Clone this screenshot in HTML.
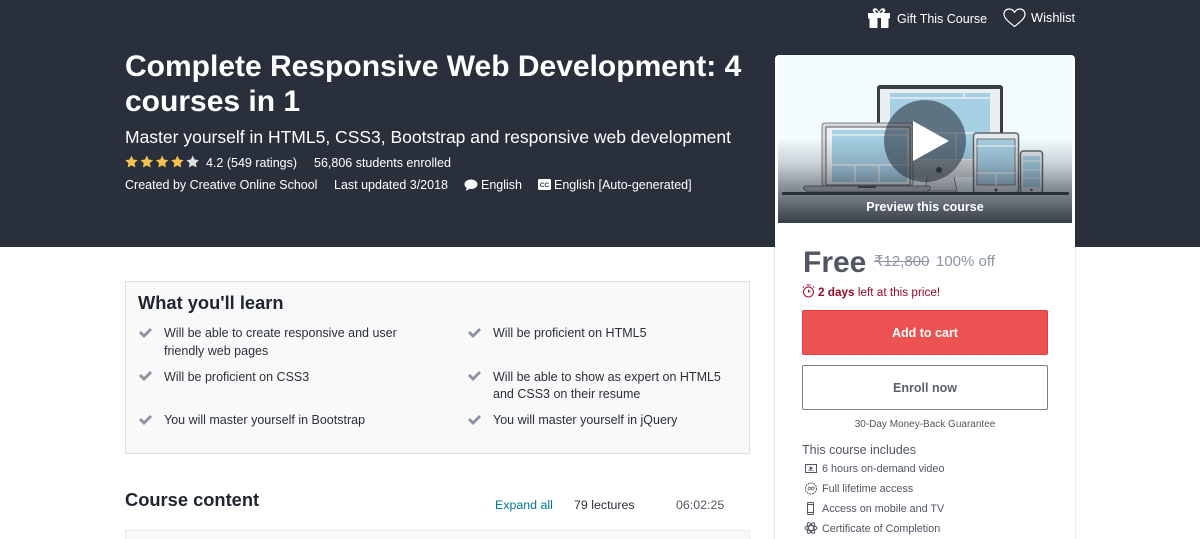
<!DOCTYPE html>
<html style="overflow:hidden;height:539px"><head><meta charset="utf-8"><style>
html,body{margin:0;padding:0;background:#fff}
body{position:relative;width:1200px;height:539px;overflow:hidden;font-family:"Liberation Sans",sans-serif;color:#29303b}
#p{position:absolute;left:0;top:0;width:1200px;height:539px;overflow:hidden}
.t{position:absolute;white-space:nowrap;line-height:1}
.a{position:absolute}
.w{color:#fff}
</style></head><body><div id="p">
<div class="a" style="left:0;top:0;width:1200px;height:247px;background:#29303b"></div>

<svg class="a" style="left:867px;top:8px" width="24" height="20" viewBox="0 0 24 20"><path d="M7 .5c2.200-1 4 1 5 3.500 1-2.500 2.800-4.500 5-3.500 2 1 1.700 3.300-.5 4.500H23v5.500H1V5h6.500C5.300 3.800 5 1.500 7 .5z" fill="#fff"/><path d="M9.500 2.300c1 .4 1.500 1.400 1.800 2.500-1.300 0-2.600-.3-3-1.200-.4-.9.400-1.600 1.200-1.300zM14.500 2.300c-1 .4-1.500 1.400-1.800 2.500 1.300 0 2.600-.3 3-1.200.4-.9-.4-1.600-1.200-1.300z" fill="#29303b"/><path d="M2.500 10h19v9a1 1 0 0 1-1 1h-17a1 1 0 0 1-1-1z" fill="#fff"/><path d="M10.500 10h3.500v10h-3.500z" fill="#29303b"/></svg>
<div class="t w" style="left:897px;top:13px;font-size:12.500px">Gift This Course</div>
<svg class="a" style="left:1003px;top:8px" width="23" height="20" viewBox="0 0 23 20"><path d="M11.500 18.500C6 14 1 10.500 1 6.200 1 3.200 3.300 1 6 1c2.300 0 4.300 1.200 5.500 3.300C12.700 2.200 14.700 1 17 1c2.700 0 5 2.200 5 5.200 0 4.300-5 7.800-10.500 12.300z" fill="none" stroke="#fff" stroke-width="1.200"/></svg>
<div class="t w" style="left:1031px;top:12px;font-size:12.800px">Wishlist</div>

<div class="t w" style="left:125px;top:52px;font-size:30px;font-weight:bold">Complete Responsive Web Development: 4</div>
<div class="t w" style="left:125px;top:87px;font-size:30px;font-weight:bold">courses in 1</div>
<div class="t w" style="left:125px;top:129px;font-size:17.500px">Master yourself in HTML5, CSS3, Bootstrap and responsive web development</div>

<svg class="a" style="left:125px;top:155px" width="74" height="14" viewBox="0 0 74 14">
<g fill="#f4c150"><path d="M6.500.5l1.900 4 4.300.6-3.100 3 .7 4.400-3.800-2.100-3.800 2.100.7-4.400-3.100-3 4.300-.6z"/><path transform="translate(15.300)" d="M6.500.5l1.900 4 4.300.6-3.100 3 .7 4.400-3.800-2.100-3.800 2.100.7-4.400-3.100-3 4.300-.6z"/><path transform="translate(30.600)" d="M6.500.5l1.900 4 4.300.6-3.100 3 .7 4.400-3.800-2.100-3.800 2.100.7-4.400-3.100-3 4.300-.6z"/><path transform="translate(45.900)" d="M6.500.5l1.900 4 4.300.6-3.100 3 .7 4.400-3.800-2.100-3.800 2.100.7-4.400-3.100-3 4.300-.6z"/></g>
<path transform="translate(61.200)" d="M6.500.5l1.900 4 4.300.6-3.100 3 .7 4.400-3.800-2.100-3.800 2.100.7-4.400-3.100-3 4.300-.6z" fill="#dedfe0"/>
</svg>
<div class="t w" style="left:206px;top:157px;font-size:12.500px">4.2 (549 ratings)</div>
<div class="t w" style="left:314px;top:157px;font-size:12.500px">56,806 students enrolled</div>
<div class="t w" style="left:125px;top:179px;font-size:12.500px">Created by Creative Online School</div>
<div class="t w" style="left:334px;top:179px;font-size:12.500px">Last updated 3/2018</div>
<svg class="a" style="left:464px;top:179px" width="14" height="12" viewBox="0 0 14 12"><path d="M7 .5c3.500 0 6.500 2 6.500 4.700S10.500 10 7 10c-.6 0-1.100 0-1.600-.2C4.200 11 2.600 11.500 1.500 11.500c.8-.8 1.200-1.700 1.200-2.700C1.200 7.900.5 6.600.5 5.200.5 2.500 3.500.5 7 .5z" fill="#fff"/></svg>
<div class="t w" style="left:481px;top:179px;font-size:12.500px">English</div>
<svg class="a" style="left:538px;top:179px" width="13" height="11" viewBox="0 0 13 11"><rect width="13" height="11" rx="1.500" fill="#fff"/><text x="6.500" y="8" font-size="6.500" font-weight="bold" text-anchor="middle" fill="#29303b" font-family="Liberation Sans">CC</text></svg>
<div class="t w" style="left:554px;top:179px;font-size:12.500px">English [Auto-generated]</div>

<!-- card -->
<div class="a" style="left:775px;top:55px;width:300px;height:500px;background:#fff;border-radius:4px;box-shadow:0 0 1px 1px rgba(29,30,31,.1)"></div>
<svg class="a" style="left:778px;top:55px" width="294" height="168" viewBox="778 55 294 168">
<defs><linearGradient id="g" x1="0" y1="0" x2="0" y2="1"><stop offset="0" stop-color="#29303b" stop-opacity=".02"/><stop offset=".28" stop-color="#29303b" stop-opacity=".2"/><stop offset=".57" stop-color="#29303b" stop-opacity=".53"/><stop offset=".76" stop-color="#29303b" stop-opacity=".7"/><stop offset="1" stop-color="#29303b" stop-opacity=".94"/></linearGradient></defs>
<rect x="778" y="55" width="294" height="168" fill="#f2fcff"/>
<!-- monitor -->
<path d="M880 85h120a3 3 0 0 1 3 3v72h-126v-72a3 3 0 0 1 3-3z" fill="#3a3d43"/>
<rect x="880" y="89" width="120" height="71" fill="#e9eef0"/>
<rect x="890" y="93" width="100" height="66" fill="#a5cfe3"/>
<path d="M890 98h100M964 93v5M890 133h100M956 133v26" stroke="#e9eef0" stroke-width="1.500"/>
<rect x="877" y="160" width="126" height="17" fill="#d6dadc"/>
<circle cx="939" cy="170" r="3" fill="#2f3238"/>
<path d="M927 177l-2 14h32l-3-14" fill="#e4e8ea" stroke="#777" />
<!-- laptop -->
<rect x="822" y="123" width="91" height="63" rx="3" fill="#d7dadc" stroke="#7c8085" stroke-width="1"/>
<rect x="826" y="127" width="84" height="58" fill="#eef1f2" stroke="#55585d" stroke-width="1"/>
<rect x="832" y="130" width="75" height="52" fill="#a5cfe3"/>
<path d="M832 135h75M832 165h75M855 165v17M879 165v17" stroke="#e9eef0" stroke-width="1.500"/>
<path d="M805 186h123a2 2 0 0 1 2 3l-3 3H808l-4-3a2 2 0 0 1 1-3z" fill="#c2c6c9" stroke="#6b6f74"/>
<rect x="858" y="186" width="18" height="2" fill="#444"/>
<!-- tablet -->
<rect x="973.500" y="133" width="45" height="60" rx="3" fill="#e6e9ea" stroke="#5d6167" stroke-width="1.500"/>
<rect x="977" y="139" width="38" height="46" fill="#a5cfe3" stroke="#6b6f74"/>
<path d="M977 146h38M977 173h38M996 173v12" stroke="#e9eef0" stroke-width="1.500"/>
<circle cx="996" cy="190" r="1.500" fill="#333"/>
<!-- phone -->
<rect x="1020.500" y="151" width="22" height="42" rx="3" fill="#e6e9ea" stroke="#5d6167" stroke-width="1.500"/>
<rect x="1023" y="156" width="17" height="31" fill="#a5cfe3"/>
<path d="M1023 161h17M1023 170h17M1023 178h17" stroke="#e9eef0" stroke-width="1"/>
<circle cx="1031.500" cy="190" r="1.200" fill="#333"/>
<rect x="778" y="140" width="294" height="83" fill="url(#g)"/>
<rect x="782" y="192" width="287" height="3" rx="1" fill="#2a2e35"/>
<circle cx="925" cy="141" r="41" fill="#29303b" opacity=".58"/>
<path d="M913 121l36 20-36 20z" fill="#fff"/>
</svg>
<div class="t w" style="left:778px;top:201px;width:294px;text-align:center;font-size:12.500px;font-weight:bold">Preview this course</div>

<div class="t" style="left:803px;top:248px;font-size:30px;font-weight:bold;color:#505763">Free</div>
<div class="t" style="left:874px;top:254px;font-size:15px;color:#8a92a3;text-decoration:line-through">₹12,800</div>
<div class="t" style="left:936px;top:254px;font-size:15px;color:#8a92a3">100% off</div>
<svg class="a" style="left:802px;top:284px" width="13" height="14" viewBox="0 0 13 14"><circle cx="6.500" cy="8" r="5" fill="none" stroke="#a1122d" stroke-width="1"/><path d="M6.500 5.500V8l2-1M4.500 1h4M2 2.500L.8 3.700M11 2.500l1.200 1.200" fill="none" stroke="#a1122d" stroke-width="1"/></svg>
<div class="t" style="left:818px;top:287px;font-size:11.750px;color:#990a27"><b>2 days</b> left at this price!</div>
<div class="a" style="left:802px;top:310px;width:246px;height:45px;box-sizing:border-box;background:#ec5252;border:1px solid #e93d3d;border-radius:2px;color:#fff;font-size:12.500px;font-weight:bold;text-align:center;line-height:45px">Add to cart</div>
<div class="a" style="left:802px;top:365px;width:246px;height:45px;box-sizing:border-box;background:#fff;border:1px solid #7a8088;border-radius:2px;color:#5b616c;font-size:12.500px;font-weight:bold;text-align:center;line-height:45px">Enroll now</div>
<div class="t" style="left:802px;top:420px;width:246px;text-align:center;font-size:10px;color:#505763">30-Day Money-Back Guarantee</div>
<div class="t" style="left:802px;top:444px;font-size:12.500px;color:#505763">This course includes</div>

<svg class="a" style="left:804px;top:462px" width="14" height="13" viewBox="0 0 14 13"><path d="M1.500 2.500h11v8h-11z" fill="none" stroke="#505763"/><path d="M6 4.500l2.500 1.700L6 8zM4 8.500h6" fill="#505763" stroke="#505763" stroke-width=".6"/></svg>
<div class="t" style="left:822px;top:463.500px;font-size:10.800px;color:#505763">6 hours on-demand video</div>
<svg class="a" style="left:804px;top:482px" width="14" height="13" viewBox="0 0 14 13"><circle cx="7" cy="6.500" r="5.500" fill="none" stroke="#505763" stroke-dasharray="2 .8"/><path d="M4 6.500c1-2 2-2 3 0s2 2 3 0-2-2-3 0-2 2-3 0z" fill="none" stroke="#505763" stroke-width=".8"/></svg>
<div class="t" style="left:822px;top:483.500px;font-size:10.800px;color:#505763">Full lifetime access</div>
<svg class="a" style="left:806px;top:502px" width="9" height="13" viewBox="0 0 9 13"><rect x="1.500" y=".5" width="6" height="12" rx="1" fill="none" stroke="#505763"/><path d="M1.500 2.500h6M1.500 10.500h6" stroke="#505763"/></svg>
<div class="t" style="left:822px;top:503.500px;font-size:10.800px;color:#505763">Access on mobile and TV</div>
<svg class="a" style="left:804px;top:521px" width="14" height="14" viewBox="0 0 14 14"><g fill="none" stroke="#505763"><ellipse cx="7" cy="7" rx="6" ry="2.500"/><ellipse cx="7" cy="7" rx="6" ry="2.500" transform="rotate(60 7 7)"/><ellipse cx="7" cy="7" rx="6" ry="2.500" transform="rotate(120 7 7)"/></g></svg>
<div class="t" style="left:822px;top:523.500px;font-size:10.800px;color:#505763">Certificate of Completion</div>

<!-- learn box -->
<div class="a" style="left:125px;top:281px;width:625px;height:173px;box-sizing:border-box;background:#f9f9f9;border:1px solid #dedfe0"></div>
<div class="t" style="left:138px;top:294px;font-size:18.300px;font-weight:bold;color:#1e2530">What you'll learn</div>
<svg width="0" height="0" style="position:absolute"><defs><path id="c" d="M0 6l2-2 3 3 6-6 2 2-8 8z" fill="#8a92a3"/></defs></svg>
<svg class="a" style="left:139px;top:327px" width="13" height="12"><use href="#c"/></svg>
<div class="t" style="left:164px;top:327px;font-size:12.500px">Will be able to create responsive and user</div>
<div class="t" style="left:164px;top:345px;font-size:12.500px">friendly web pages</div>
<svg class="a" style="left:139px;top:370px" width="13" height="12"><use href="#c"/></svg>
<div class="t" style="left:164px;top:371px;font-size:12.500px">Will be proficient on CSS3</div>
<svg class="a" style="left:139px;top:414px" width="13" height="12"><use href="#c"/></svg>
<div class="t" style="left:164px;top:414px;font-size:12.500px">You will master yourself in Bootstrap</div>
<svg class="a" style="left:468px;top:327px" width="13" height="12"><use href="#c"/></svg>
<div class="t" style="left:493px;top:327px;font-size:12.500px">Will be proficient on HTML5</div>
<svg class="a" style="left:468px;top:370px" width="13" height="12"><use href="#c"/></svg>
<div class="t" style="left:493px;top:371px;font-size:12.500px">Will be able to show as expert on HTML5</div>
<div class="t" style="left:493px;top:388px;font-size:12.500px">and CSS3 on their resume</div>
<svg class="a" style="left:468px;top:414px" width="13" height="12"><use href="#c"/></svg>
<div class="t" style="left:493px;top:414px;font-size:12.500px">You will master yourself in jQuery</div>

<div class="t" style="left:125px;top:491px;font-size:18.300px;font-weight:bold;color:#1e2530">Course content</div>
<div class="t" style="left:495px;top:499px;font-size:12.400px;color:#007791">Expand all</div>
<div class="t" style="left:574px;top:499px;font-size:12.400px">79 lectures</div>
<div class="t" style="left:676px;top:499px;font-size:12.400px;color:#505763">06:02:25</div>
<div class="a" style="left:125px;top:530px;width:625px;height:20px;box-sizing:border-box;background:#f9f9f9;border:1px solid #e8e9eb"></div>
</div></body></html>
